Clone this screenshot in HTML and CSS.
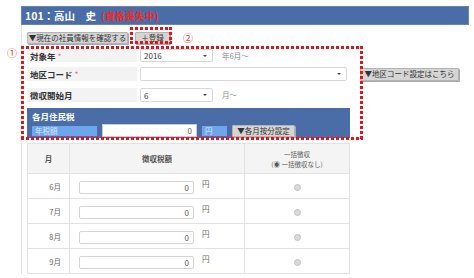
FILE: index.html
```html
<!doctype html>
<html lang="ja">
<head>
  <meta charset="UTF-8">
  <meta name="viewport" content="width=device-width, initial-scale=1.0">
  <title>住民税設定</title>
  <link rel="stylesheet" href="styles.css">
</head>
<body>
  <div class="page">
    <div class="title">101：高山　史<span class="lost">(資格喪失中)</span></div>

    <div class="content">
      <div class="toolbar">
        <button class="btn btn-check">▼現在の社員情報を確認する</button>
        <button class="btn btn-add">＋登録<span class="mark mark-add"></span></button>
        <span class="num">②</span>
      </div>

      <div class="form">
        <span class="mark mark-form"></span>
        <span class="num num-1">①</span>

        <div class="row row-year">
          <div class="label">対象年<i class="req">*</i></div>
          <div class="select w-short">2016</div>
          <span class="note">年6月〜</span>
        </div>

        <div class="row row-area">
          <div class="label">地区コード<i class="req">*</i></div>
          <div class="select w-long"></div>
          <button class="btn btn-area">▼地区コード設定はこちら</button>
        </div>

        <div class="row row-start">
          <div class="label">徴収開始月</div>
          <div class="select w-short">6</div>
          <span class="note">月〜</span>
        </div>

        <div class="tax">
          <div class="tax-title">各月住民税</div>
          <div class="tax-row">
            <span class="tag tag-wide">年税額</span>
            <input type="text" class="tax-input" value="0">
            <span class="tag tag-yen">円</span>
            <button class="btn btn-split">▼各月按分設定</button>
          </div>
        </div>
      </div>

      <table class="months">
        <thead>
          <tr>
            <th class="c-month">月</th>
            <th class="c-amount">徴収税額</th>
            <th class="c-lump">一括徴収<br>(◉ 一括徴収なし)</th>
          </tr>
        </thead>
        <tbody>
          <tr>
            <td class="c-month">6月</td>
            <td class="c-amount"><input type="text" value="0"><span class="yen">円</span></td>
            <td class="c-lump"><span class="radio"></span></td>
          </tr>
          <tr>
            <td class="c-month">7月</td>
            <td class="c-amount"><input type="text" value="0"><span class="yen">円</span></td>
            <td class="c-lump"><span class="radio"></span></td>
          </tr>
          <tr>
            <td class="c-month">8月</td>
            <td class="c-amount"><input type="text" value="0"><span class="yen">円</span></td>
            <td class="c-lump"><span class="radio"></span></td>
          </tr>
          <tr>
            <td class="c-month">9月</td>
            <td class="c-amount"><input type="text" value="0"><span class="yen">円</span></td>
            <td class="c-lump"><span class="radio"></span></td>
          </tr>
        </tbody>
      </table>
    </div>
  </div>
</body>
</html>
```

FILE: styles.css
```css
body {
  margin: 0;
  background-color: #fff;
  color: #333;
  font-family: "Noto Sans CJK JP", "Noto Sans", sans-serif;
}

.page {
  width: 448px;
  padding: 6px 0 0 21px;
}

.title {
  height: 17px;
  padding-left: 3px;
  background-color: #4a6da7;
  border: 1px solid #6784b6;
  color: #fff;
  font-size: 10.5px;
  font-weight: bold;
  line-height: 17px;
}

.lost {
  margin-left: 5px;
  color: #ee2a24;
  font-size: 10px;
}

.content {
  padding: 7px 0 0 5px;
  border-left: 1px solid #e2e2e2;
}

/* buttons */
.btn {
  height: 12px;
  padding: 0;
  border: 1px solid #b3b3b3;
  border-radius: 1px;
  background-color: #d5d5d5;
  box-shadow: 1px 1px 0 #a9a9a9;
  color: #333;
  font-family: inherit;
  font-size: 7.5px;
  line-height: 10px;
  white-space: nowrap;
}

.toolbar {
  display: flex;
  align-items: center;
  height: 12px;
}

.btn-check {
  width: 101px;
}

.btn-add {
  position: relative;
  width: 35px;
  margin-left: 7px;
}

.num {
  margin-left: 13px;
  color: #e8322f;
  font-size: 10px;
  line-height: 1;
}

/* red dotted annotation boxes */
.mark {
  position: absolute;
  background:
    repeating-linear-gradient(90deg, #e0141b 0 3px, transparent 3px 5px) top / 100% 3px no-repeat,
    repeating-linear-gradient(90deg, #e0141b 0 3px, transparent 3px 5px) bottom / 100% 3px no-repeat,
    repeating-linear-gradient(180deg, #e0141b 0 3px, transparent 3px 5px) left / 3px 100% no-repeat,
    repeating-linear-gradient(180deg, #e0141b 0 3px, transparent 3px 5px) right / 3px 100% no-repeat;
  pointer-events: none;
}

.mark-add {
  top: -6px;
  left: -6px;
  right: -3px;
  bottom: -1px;
}

.form {
  position: relative;
  margin-top: 2px;
  padding: 3px 0 2px;
}

.mark-form {
  top: 0;
  left: -6px;
  width: 342px;
  bottom: 0;
}

.num-1 {
  position: absolute;
  top: 2px;
  left: -20px;
  margin: 0;
}

/* form rows */
.row {
  display: flex;
  align-items: center;
}

.row-year {
  height: 13px;
  margin-bottom: 5px;
}

.row-area {
  height: 14px;
  margin-bottom: 7px;
}

.row-start {
  height: 14px;
  margin-bottom: 6px;
}

.label {
  display: flex;
  align-items: center;
  align-self: stretch;
  width: 107px;
  margin-right: 3px;
  padding-left: 3px;
  background-color: #f3f3f3;
  font-size: 8.5px;
  font-weight: bold;
}

.req {
  margin-left: 2px;
  color: #ec6d8f;
  font-style: normal;
  font-weight: normal;
}

.select {
  position: relative;
  display: flex;
  align-items: center;
  box-sizing: border-box;
  height: 100%;
  padding-left: 3px;
  border: 1px solid #d8d8d8;
  border-radius: 2px;
  font-size: 8px;
}

.select::after {
  content: "";
  position: absolute;
  top: 50%;
  right: 5px;
  margin-top: -1px;
  border: 2px solid transparent;
  border-top-color: #444;
  border-bottom: 0;
}

.w-short {
  width: 73px;
}

.w-long {
  width: 207px;
}

.note {
  align-self: flex-start;
  margin: 1px 0 0 9px;
  color: #888;
  font-size: 7.5px;
}

.btn-area {
  width: 99px;
  height: 13px;
  margin-left: 13px;
}

/* monthly tax panel */
.tax {
  box-sizing: border-box;
  width: 323px;
  height: 30px;
  padding: 4px 5px 0;
  background-color: #4a6da7;
}

.tax-title {
  color: #fff;
  font-size: 8.5px;
  font-weight: bold;
  line-height: 9px;
}

.tax-row {
  display: flex;
  align-items: center;
  height: 13px;
  margin-top: 3px;
}

.tag {
  height: 10px;
  padding-left: 3px;
  box-sizing: border-box;
  background-color: #6ea6ee;
  color: #d6e7fc;
  font-size: 7.5px;
  line-height: 10px;
}

.tag-wide {
  width: 65px;
}

.tag-yen {
  width: 25px;
  margin-left: 5px;
}

.tax-input {
  box-sizing: border-box;
  width: 95px;
  height: 13px;
  margin: 0 0 0 5px;
  padding: 0 4px 0 0;
  border: 1px solid #ccc;
  color: #555;
  font-family: inherit;
  font-size: 8px;
  text-align: right;
}

.btn-split {
  width: 63px;
  margin-left: 5px;
}

/* months table */
.months {
  width: 323px;
  margin-top: 3px;
  border-collapse: collapse;
  table-layout: fixed;
}

.months th,
.months td {
  padding: 0;
  border: 1px solid #e2e2e2;
}

.months th {
  height: 29px;
  background-color: #f4f4f4;
  color: #555;
  font-size: 7.5px;
  font-weight: bold;
}

.months td {
  height: 24px;
  color: #666;
  font-size: 7.5px;
}

.months .c-month {
  width: 41px;
}

.months .c-amount {
  width: 174px;
}

.months th.c-lump {
  font-size: 6.5px;
  font-weight: normal;
  line-height: 10px;
}

.months td.c-month {
  padding-right: 8px;
  text-align: right;
}

.months td.c-amount {
  padding-left: 9px;
  white-space: nowrap;
}

.months td input {
  box-sizing: border-box;
  width: 115px;
  height: 13px;
  margin: 0;
  padding: 0 4px 0 0;
  border: 1px solid #d5d5d5;
  border-radius: 2px;
  color: #555;
  font-family: inherit;
  font-size: 8px;
  text-align: right;
  vertical-align: middle;
}

.yen {
  margin-left: 8px;
  vertical-align: 3px;
}

.months td.c-lump {
  text-align: center;
}

.radio {
  display: inline-block;
  width: 5px;
  height: 5px;
  border: 1px solid #c2c2c2;
  border-radius: 50%;
  background-color: #d9d9d9;
  vertical-align: middle;
}
```
